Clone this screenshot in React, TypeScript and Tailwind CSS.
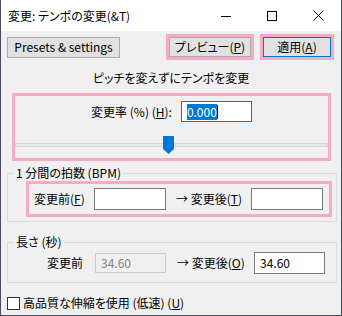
import React from "react";

const font = "font-['Noto_Sans_CJK_JP','Noto_Sans',sans-serif] [font-feature-settings:'palt']";

const Pink = ({ className, children }: any) => (
  <div className={"border-[3px] border-[#f5abc6] " + className}>{children}</div>
);

const TextBox = ({ value, disabled, className }: any) => (
  <div
    className={
      "flex shrink-0 items-center pl-[5px] border " +
      (disabled ? "bg-[#f0f0f0] border-[#cccccc] text-[#838383] " : "bg-white border-[#7a7a7a] ") +
      className
    }
  >
    {value}
  </div>
);

const TitleButton = ({ children }: any) => (
  <div className="flex h-full w-[46px] items-center justify-center">{children}</div>
);

export default function App() {
  return (
    <div
      className={
        "flex h-[316px] w-[342px] flex-col overflow-hidden border-x border-b border-[#4b4b5f] bg-[#f0f0f0] text-[12px] leading-[16px] text-black " +
        font
      }
    >
      {/* title bar */}
      <div className="flex h-[31px] shrink-0 items-center bg-white">
        <span className="flex-1 pl-[7px]">変更: テンポの変更(&amp;T)</span>
        <TitleButton>
          <svg width="10" height="10" viewBox="0 0 10 10">
            <path d="M0 5.5h10" stroke="#000" strokeWidth="1" />
          </svg>
        </TitleButton>
        <TitleButton>
          <svg width="10" height="10" viewBox="0 0 10 10">
            <rect x="0.5" y="0.5" width="9" height="9" fill="none" stroke="#000" strokeWidth="1" />
          </svg>
        </TitleButton>
        <TitleButton>
          <svg width="11" height="11" viewBox="0 0 11 11">
            <path d="M0.5 0.5l10 10M10.5 0.5l-10 10" stroke="#000" strokeWidth="1" />
          </svg>
        </TitleButton>
      </div>

      {/* top buttons */}
      <div className="mt-[3px] flex items-center pl-[6px] pr-[7px]">
        <button className="flex h-[21px] w-[113px] items-center justify-center border border-[#adadad] bg-[#e1e1e1]">
          Presets &amp; settings
        </button>
        <div className="flex-1" />
        <Pink className="h-[26px] w-[88px]">
          <button className="flex h-full w-full items-center justify-center border border-[#adadad] bg-[#e1e1e1]">
            プレビュー(<u>P</u>)
          </button>
        </Pink>
        <Pink className="ml-[6px] h-[26px] w-[74px]">
          <button className="flex h-full w-full items-center justify-center border border-[#0078d7] bg-[#e1e1e1]">
            適用(<u>A</u>)
          </button>
        </Pink>
      </div>

      <div className="mt-[10px] text-center">ピッチを変えずにテンポを変更</div>

      {/* tempo percent */}
      <Pink className="ml-[11px] mr-[10px] mt-[7px] flex h-[68px] flex-col">
        <div className="mt-[5px] flex items-center justify-center">
          <span>
            変更率 (%) (<u>H</u>):
          </span>
          <div className="ml-[9px] flex h-[21px] w-[71px] items-center border border-[#0078d7] bg-white pl-[5px]">
            <span className="bg-[#0078d7] text-white">0.000</span>
            <span className="h-[14px] w-px bg-black" />
          </div>
        </div>
        <div className="relative mt-[14px] h-[22px]">
          <div className="absolute left-0 right-0 top-[7px] h-[4px] border border-[#d6d6d6] bg-[#e7e7e7]" />
          <svg className="absolute left-[148px] top-0" width="11" height="18" viewBox="0 0 11 18">
            <path d="M0 0h11v13l-5.5 5l-5.5-5z" fill="#0078d7" />
          </svg>
        </div>
      </Pink>

      {/* BPM */}
      <fieldset className="ml-[6px] mr-[4px] mt-[4px] border border-[#dcdcdc]">
        <legend className="ml-[6px] px-[2px]">1 分間の拍数 (BPM)</legend>
        <Pink className="mb-[4px] ml-[18px] mr-[4px] flex h-[36px] items-center">
          <span className="w-[65px] shrink-0 pl-[5px]">
            変更前(<u>F</u>)
          </span>
          <TextBox className="h-[22px] w-[72px]" value="" />
          <span className="ml-[10px] w-[75px] shrink-0">
            → 変更後(<u>T</u>)
          </span>
          <TextBox className="h-[22px] w-[72px]" value="" />
        </Pink>
      </fieldset>

      {/* length */}
      <fieldset className="ml-[6px] mr-[4px] mt-[12px] border border-[#dcdcdc]">
        <legend className="ml-[6px] px-[2px]">長さ (秒)</legend>
        <div className="mb-[8px] mt-[2px] flex items-center">
          <span className="w-[75px] shrink-0 text-right">変更前</span>
          <TextBox className="ml-[12px] h-[20px] w-[71px]" value="34.60" disabled />
          <span className="ml-[11px] w-[77px] shrink-0">
            → 変更後(<u>O</u>)
          </span>
          <TextBox className="h-[22px] w-[71px]" value="34.60" />
        </div>
      </fieldset>

      {/* checkbox */}
      <label className="mt-[12px] flex h-[16px] items-center">
        <span className="ml-[6px] h-[13px] w-[13px] border border-[#333333] bg-white" />
        <span className="ml-[3px]">
          高品質な伸縮を使用 (低速) (<u>U</u>)
        </span>
      </label>
    </div>
  );
}
